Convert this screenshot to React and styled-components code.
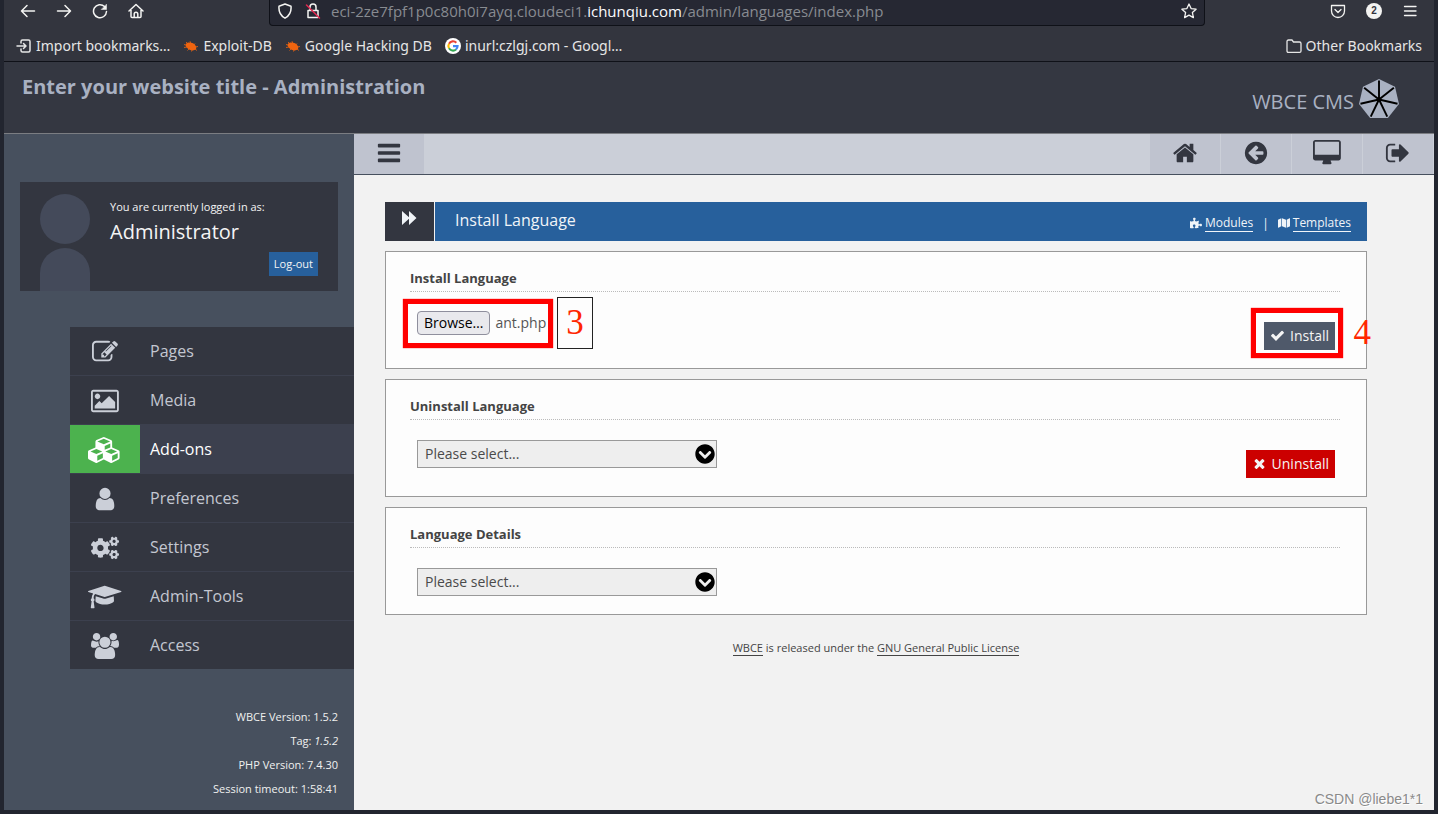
import React, { useRef } from "react";
import styled, { createGlobalStyle, css } from "styled-components";
import { FaCogs, FaMap, FaPuzzlePiece, FaChevronCircleDown } from "react-icons/fa";

const GlobalStyle = createGlobalStyle`
  *, *::before, *::after { box-sizing: border-box; }
  body { margin: 0; background: #22252f; }
  button, select, input { font: inherit; color: inherit; }
  button { border: 0; padding: 0; background: none; cursor: pointer; }
  a { color: inherit; text-decoration: none; }
`;

const ui = `"Noto Sans", "Open Sans", sans-serif`;
const page = `"Open Sans", "Noto Sans", sans-serif`;

/* ---------- icons ---------- */

const glyphs = {
  bars: ["0 0 1792 1792", "M1664 1344v128q0 26-19 45t-45 19h-1408q-26 0-45-19t-19-45v-128q0-26 19-45t45-19h1408q26 0 45 19t19 45zm0-512v128q0 26-19 45t-45 19h-1408q-26 0-45-19t-19-45v-128q0-26 19-45t45-19h1408q26 0 45 19t19 45zm0-512v128q0 26-19 45t-45 19h-1408q-26 0-45-19t-19-45v-128q0-26 19-45t45-19h1408q26 0 45 19t19 45z"],
  home: ["0 0 1792 1792", "M1472 992v480q0 26-19 45t-45 19h-384v-384h-256v384h-384q-26 0-45-19t-19-45v-480q0-1 .5-3t.5-3l575-474 575 474q1 2 1 6zm223-69l-62 74q-8 9-21 11h-3q-13 0-21-7l-692-577-692 577q-12 8-24 7-13-2-21-11l-62-74q-8-10-7-23.5t11-21.5l719-599q32-26 76-26t76 26l244 204v-195q0-14 9-23t23-9h192q14 0 23 9t9 23v408l219 182q10 8 11 21.5t-7 23.5z"],
  back: ["0 0 1792 1792", "M1408 960v-128q0-26-19-45t-45-19h-502l189-189q19-19 19-45t-19-45l-91-91q-18-18-45-18t-45 18l-362 362-91 91q-18 18-18 45t18 45l91 91 362 362q18 18 45 18t45-18l91-91q18-18 18-45t-18-45l-189-189h502q26 0 45-19t19-45zm256-64q0 209-103 385.5t-279.5 279.5-385.5 103-385.5-103-279.5-279.5-103-385.5 103-385.5 279.5-279.5 385.5-103 385.5 103 279.5 279.5 103 385.5z"],
  desktop: ["-64 0 1920 1792", "M1728 992v-832q0-13-9.5-22.5t-22.5-9.5h-1600q-13 0-22.5 9.5t-9.5 22.5v832q0 13 9.5 22.5t22.5 9.5h1600q13 0 22.5-9.5t9.5-22.5zm128-832v1088q0 66-47 113t-113 47h-544q0 37 16 77.5t32 71 16 43.5q0 26-19 45t-45 19h-512q-26 0-45-19t-19-45q0-14 16-44t32-70 16-78h-544q-66 0-113-47t-47-113v-1088q0-66 47-113t113-47h1600q66 0 113 47t47 113z"],
  signOut: ["0 0 1792 1792", "M704 1440q0 4 1 20t.5 26.5-3 23.5-10 19.5-20.5 6.5h-320q-119 0-203.5-84.5t-84.5-203.5v-704q0-119 84.5-203.5t203.5-84.5h320q13 0 22.5 9.5t9.5 22.5q0 4 1 20t.5 26.5-3 23.5-10 19.5-20.5 6.5h-320q-66 0-113 47t-47 113v704q0 66 47 113t113 47h312l11.5 1 11.5 3 8 5.5 7 9 2 13.5zm928-544q0 26-19 45l-544 544q-19 19-45 19t-45-19-19-45v-288h-448q-26 0-45-19t-19-45v-384q0-26 19-45t45-19h448v-288q0-26 19-45t45-19 45 19l544 544q19 19 19 45z"],
  edit: ["0 0 1792 1792", "M888 1184l116-116-152-152-116 116v56h96v96h56zm440-720q-16-16-33 1l-350 350q-17 17-1 33t33-1l350-350q17-17 1-33zm80 594v190q0 119-84.5 203.5t-203.5 84.5h-832q-119 0-203.5-84.5t-84.5-203.5v-832q0-119 84.5-203.5t203.5-84.5h832q63 0 117 25 15 7 18 23 3 17-9 29l-49 49q-14 14-32 8-23-6-45-6h-832q-66 0-113 47t-47 113v832q0 66 47 113t113 47h832q66 0 113-47t47-113v-126q0-13 9-22l64-64q15-15 35-7t20 29zm-96-738l288 288-672 672h-288v-288zm444 132l-92 92-288-288 92-92q28-28 68-28t68 28l152 152q28 28 28 68t-28 68z"],
  picture: ["-64 0 1920 1792", "M576 576q0 80-56 136t-136 56-136-56-56-136 56-136 136-56 136 56 56 136zm1024 384v448h-1408v-192l320-320 160 160 512-512zm96-704h-1600q-13 0-22.5 9.5t-9.5 22.5v1216q0 13 9.5 22.5t22.5 9.5h1600q13 0 22.5-9.5t9.5-22.5v-1216q0-13-9.5-22.5t-22.5-9.5zm160 32v1216q0 66-47 113t-113 47h-1600q-66 0-113-47t-47-113v-1216q0-66 47-113t113-47h1600q66 0 113 47t47 113z"],
  cubes: ["0 0 2304 1792", "M640 1632l384-192v-314l-384 164v342zm-64-454l404-173-404-173-404 173zm1088 454l384-192v-314l-384 164v342zm-64-454l404-173-404-173-404 173zm-448-293l384-165v-266l-384 164v267zm-64-379l441-189-441-189-441 189zm1088 518v416q0 36-19 67t-52 47l-448 224q-25 14-57 14t-57-14l-448-224q-4-2-7-4-2 2-7 4l-448 224q-25 14-57 14t-57-14l-448-224q-33-16-52-47t-19-67v-416q0-38 21.5-70t56.5-48l434-186v-400q0-38 21.5-70t56.5-48l448-192q23-10 50-10t50 10l448 192q35 16 56.5 48t21.5 70v400l434 186q36 16 57 48t21 70z"],
  user: ["0 0 1792 1792", "M1536 1399q0 109-62.5 187t-150.5 78h-854q-88 0-150.5-78t-62.5-187q0-85 8.5-160.5t31.5-152 58.5-131 94-89 134.5-34.5q131 128 313 128t313-128q76 0 134.5 34.5t94 89 58.5 131 31.5 152 8.5 160.5zm-256-887q0 159-112.5 271.5t-271.5 112.5-271.5-112.5-112.5-271.5 112.5-271.5 271.5-112.5 271.5 112.5 112.5 271.5z"],
  cap: ["0 0 2304 1792", "M1774 836l18 316q4 69-82 128t-235 93.5-323 34.5-323-34.5-235-93.5-82-128l18-316 574 181q22 7 48 7t48-7zm530-324q0 23-22 31l-1120 352q-4 1-10 1t-10-1l-652-206q-43 34-71 111.5t-34 178.5q63 36 63 109 0 69-58 107l58 433q2 14-8 25-9 11-24 11h-192q-15 0-24-11-10-11-8-25l58-433q-58-38-58-107 0-73 65-111 11-207 98-330l-333-104q-22-8-22-31t22-31l1120-352q4-1 10-1t10 1l1120 352q22 8 22 31z"],
  users: ["0 0 1920 1792", "M593 896q-162 5-265 128h-134q-82 0-138-40.5t-56-118.5q0-353 124-353 6 0 43.5 21t97.5 42.5 119 21.5q67 0 133-23-5 37-5 66 0 159 93 293zm1071 637q0 120-73 189.5t-194 69.5h-874q-121 0-194-69.5t-73-189.5q0-53 3.5-103.5t14-109 26.5-108.5 43-97.5 62-81 85.5-53.5 111.5-20q10 0 43 21.5t73 48 107 48 135 21.5 135-21.5 107-48 73-48 43-21.5q61 0 111.5 20t85.5 53.5 62 81 43 97.5 26.5 108.5 14 109 3.5 103.5zm-1024-1277q0 106-75 181t-181 75-181-75-75-181 75-181 181-75 181 75 75 181zm704 384q0 159-112.5 271.5t-271.5 112.5-271.5-112.5-112.5-271.5 112.5-271.5 271.5-112.5 271.5 112.5 112.5 271.5zm576 225q0 78-56 118.5t-138 40.5h-134q-103-123-265-128 93-134 93-293 0-29-5-66 66 23 133 23 59 0 119-21.5t97.5-42.5 43.5-21q124 0 124 353zm-128-609q0 106-75 181t-181 75-181-75-75-181 75-181 181-75 181 75 75 181z"],
  check: ["0 0 1792 1792", "M1671 566q0 40-28 68l-724 724-136 136q-28 28-68 28t-68-28l-136-136-362-362q-28-28-28-68t28-68l136-136q28-28 68-28t68 28l294 295 656-657q28-28 68-28t68 28l136 136q28 28 28 68z"],
  times: ["0 0 1792 1792", "M1490 1322q0 40-28 68l-136 136q-28 28-68 28t-68-28l-294-294-294 294q-28 28-68 28t-68-28l-136-136q-28-28-28-68t28-68l294-294-294-294q-28-28-28-68t28-68l136-136q28-28 68-28t68 28l294 294 294-294q28-28 68-28t68 28l136 136q28 28 28 68t-28 68l-294 294 294 294q28 28 28 68z"],
};

const GlyphSvg = styled.svg`
  display: block;
  flex: none;
  height: ${(p) => p.$size}px;
  fill: currentColor;
`;

function Glyph({ name, size = 26 }) {
  const [box, d] = glyphs[name];
  return (
    <GlyphSvg $size={size} viewBox={box} aria-hidden="true">
      <path d={d} />
    </GlyphSvg>
  );
}

const LineSvg = styled.svg`
  display: block;
  flex: none;
  fill: none;
  stroke: currentColor;
  stroke-width: 1.5;
  stroke-linecap: round;
  stroke-linejoin: round;
`;

const Line = ({ children, size = 16 }) => (
  <LineSvg width={size} height={size} viewBox="0 0 16 16" aria-hidden="true">{children}</LineSvg>
);

const Bug = () => (
  <svg width="16" height="16" viewBox="0 0 16 16" aria-hidden="true">
    <ellipse cx="8" cy="8.4" rx="5.6" ry="3.6" fill="#f0640f" transform="rotate(24 8 8.4)" />
    <path d="M5 6L3 4M8 5.5L7 3.2M10.5 7L12 5.5M12 9l3-.5M4 9l-3 .5M6 11l-1.5 1.5M9 12l-.5 1.5M12 11l2 1.5M1 6.500l3 .8" stroke="#f0640f" strokeWidth="0.8" fill="none" />
  </svg>
);

const GoogleMark = () => (
  <svg width="16" height="16" viewBox="0 0 16 16" aria-hidden="true">
    <circle cx="8" cy="8" r="8" fill="#fff" />
    <g fill="none" strokeWidth="2.1">
      <path d="M11.300 4.700A4.600 4.600 0 0 0 4 5.700" stroke="#ea4335" />
      <path d="M4 5.700a4.600 4.600 0 0 0 0 4.600" stroke="#fbbc05" />
      <path d="M4 10.300a4.600 4.600 0 0 0 7 1.200" stroke="#34a853" />
      <path d="M8 8.100h4.600a4.600 4.600 0 0 1-1.600 3.400" stroke="#4285f4" />
    </g>
  </svg>
);

function Heptagon() {
  const point = (i, r) => {
    const a = (i * 2 * Math.PI) / 7 - Math.PI / 2;
    return [20 + r * Math.cos(a), 20.500 + r * Math.sin(a)];
  };
  const corners = [0, 1, 2, 3, 4, 5, 6];
  return (
    <svg width="40" height="40" viewBox="0 0 40 40" aria-hidden="true">
      <polygon fill="#a9b1c2" points={corners.map((i) => point(i, 20.500).join(",")).join(" ")} />
      {corners.map((i) => {
        const [x, y] = point(i, 19);
        return <line key={i} x1="20" y1="20.500" x2={x} y2={y} stroke="#000" strokeWidth="1.900" />;
      })}
      <circle cx="20" cy="20.500" r="2.200" fill="#000" />
    </svg>
  );
}

/* ---------- browser chrome ---------- */

const Frame = styled.div`
  position: relative;
  display: flex;
  flex-direction: column;
  min-height: 100vh;
  padding: 0 4px 4px;
  background: #22252f;
`;

const BrowserBar = styled.div`
  display: flex;
  height: 26px;
  padding: 0 6px;
  background: #33353e;
  color: #f4f4f2;
  font-family: ${ui};
`;

const ChromeButton = styled.button`
  display: grid;
  place-items: center;
  width: 36px;
  height: 22px;
`;

const AddressBox = styled.div`
  flex: 1;
  display: flex;
  align-items: center;
  min-width: 0;
  margin: 0 115px;
  padding: 0 7px 4px;
  border: solid #0f1118;
  border-width: 0 1px 1px;
  border-radius: 0 0 4px 4px;
  background: #262833;
`;

const Address = styled.div`
  flex: 1;
  margin-left: 10px;
  overflow: hidden;
  white-space: nowrap;
  font-family: ${page};
  font-size: 15px;
  line-height: 20px;
  color: #888b91;
  b { font-weight: 400; color: #fbfbfe; }
`;

const AddressIcons = styled.div`
  display: flex;
  gap: 12px;
`;

const CountBadge = styled.span`
  display: grid;
  place-items: center;
  width: 16px;
  height: 16px;
  border-radius: 8px;
  background: #f4f4f2;
  color: #33353e;
  font: 700 10px/16px "Liberation Sans", sans-serif;
`;

const BookmarksBar = styled.nav`
  display: flex;
  gap: 13px;
  height: 36px;
  padding: 8px 12px 0;
  border-bottom: 1px solid #0f1118;
  background: #33353e;
  color: #e6e6e6;
  font: 14px/24px ${ui};
`;

const Bookmark = styled.a`
  display: flex;
  align-items: center;
  gap: 4px;
  height: 24px;
  white-space: nowrap;
  &:last-child { margin-left: auto; }
`;

/* ---------- page header ---------- */

const Header = styled.header`
  display: flex;
  justify-content: space-between;
  height: 72px;
  padding: 10px 35px 0 18px;
  border-bottom: 1px solid #7b7d82;
  background: #343741;
  color: #a9b1c2;
  font-family: ${page};
`;

const SiteTitle = styled.h1`
  margin: 0;
  font-size: 20px;
  line-height: 30px;
`;

const Brand = styled.div`
  display: flex;
  align-items: flex-end;
  gap: 5px;
  height: 47px;
  font-size: 20px;
  line-height: 34px;
`;

/* ---------- sidebar ---------- */

const Body = styled.div`
  flex: 1;
  display: flex;
  font-family: ${page};
`;

const Sidebar = styled.aside`
  flex: none;
  display: flex;
  flex-direction: column;
  width: 350px;
  padding: 48px 0 9px;
  background: #47505e;
`;

const UserCard = styled.section`
  display: flex;
  gap: 20px;
  height: 109px;
  margin: 0 16px 36px;
  padding: 12px 20px 0;
  background: #333640;
  color: #f4f4f4;
`;

const Avatar = styled.div`
  display: flex;
  flex-direction: column;
  gap: 4px;
  width: 50px;
  &::before {
    content: "";
    height: 50px;
    border-radius: 25px;
    background: #444a5a;
  }
  &::after {
    content: "";
    flex: 1;
    border-radius: 25px 25px 0 0;
    background: #444a5a;
  }
`;

const UserText = styled.div`
  flex: 1;
  display: flex;
  flex-direction: column;
  font-size: 11px;
  line-height: 26px;
  strong { font-size: 20px; font-weight: 400; line-height: 24px; }
`;

const LogoutButton = styled.button`
  align-self: flex-end;
  height: 24px;
  margin-top: 8px;
  padding: 0 5px;
  background: #27609c;
  line-height: 24px;
`;

const Menu = styled.nav`
  margin-left: 66px;
  background: #333640;
`;

const MenuLink = styled.a`
  display: flex;
  align-items: center;
  gap: 10px;
  height: 49px;
  border-bottom: 1px solid #3c404e;
  color: #c3c7d1;
  font-size: 16px;
  &:last-child { height: 48px; border-bottom: 0; }
  ${(p) => p.$active && css`
    background: #3c404e;
    color: #fff;
  `}
`;

const MenuIcon = styled.span`
  display: grid;
  place-items: center;
  width: 70px;
  height: 48px;
  padding-top: 2px;
  background: ${(p) => (p.$active ? "#4cb24e" : "transparent")};
  color: ${(p) => (p.$active ? "#fff" : "#cbcfd8")};
`;

const Versions = styled.div`
  margin-top: auto;
  padding-right: 16px;
  color: #f0f0f0;
  font-size: 11px;
  line-height: 24px;
  text-align: right;
`;

/* ---------- main column ---------- */

const Main = styled.main`
  flex: 1;
  min-width: 0;
  background: #f2f2f2;
  color: #444;
`;

const Toolbar = styled.div`
  display: flex;
  height: 41px;
  border-bottom: 1px solid #47505e;
  background: #cbcfd8;
  color: #333640;
`;

const ToolButton = styled.button`
  display: grid;
  place-items: center;
  width: 71px;
  height: 40px;
  padding-bottom: 3px;
  border-right: 1px solid #cbcfd8;
  background: #bfc3cf;
  &:first-child { margin-right: auto; }
`;

const Content = styled.div`
  display: flex;
  flex-direction: column;
  gap: 10px;
  padding: 27px 67px 20px 31px;
`;

const TitleBar = styled.div`
  display: flex;
  gap: 1px;
  height: 39px;
  color: #f0f4f8;
`;

const TitleIcon = styled.div`
  display: grid;
  place-items: center;
  width: 49px;
  padding: 0 2px 8px 0;
  background: #333640;
`;

const TitleBlue = styled.div`
  flex: 1;
  display: flex;
  justify-content: space-between;
  padding: 0 16px 0 20px;
  background: #27609c;
  h2 { margin: 0; font-size: 16px; font-weight: 400; line-height: 36px; }
`;

const TitleLinks = styled.div`
  display: flex;
  align-items: center;
  gap: 9px;
  padding-top: 3px;
  font-size: 12px;
`;

const IconLink = styled.a`
  display: flex;
  align-items: center;
  gap: 3px;
  span { border-bottom: 1px solid currentColor; line-height: 16px; }
`;

const Panel = styled.section`
  position: relative;
  border: 1px solid #999;
  background: #fdfdfd;
`;

const PanelTitle = styled.h3`
  height: 40px;
  margin: 0 26px 0 24px;
  padding-top: 16px;
  border-bottom: 1px dotted #bbb;
  font-size: 13px;
  line-height: 20px;
`;

const PanelBody = styled.form`
  display: flex;
  justify-content: space-between;
  align-items: flex-start;
  padding: 20px 31px 18px;
  font-size: 14px;
`;

const FileRow = styled.div`
  display: flex;
  align-items: center;
  gap: 5px;
  height: 22px;
  color: #555;
  span { padding-bottom: 2px; }
`;

const BrowseButton = styled.button`
  height: 24px;
  padding: 0 6px;
  border: 1px solid #8f8f9d;
  border-radius: 4px;
  background: #e9e9ed;
  color: #000;
  font-size: 14px;
  line-height: 22px;
`;

const ActionButton = styled.button`
  display: flex;
  align-items: center;
  gap: 5px;
  height: 28px;
  margin-top: 10px;
  padding: 0 6px 2px;
  background: ${(p) => (p.$danger ? "#c00" : "#4f596a")};
  color: #f4f4f4;
`;

const SelectWrap = styled.label`
  position: relative;
  width: 300px;
  height: 28px;
  color: #000;
`;

const Select = styled.select`
  appearance: none;
  display: block;
  width: 100%;
  height: 28px;
  padding: 0 28px 2px 7px;
  border: 1px solid #999;
  border-radius: 0;
  background: #eee;
  color: #4a4a4a;
`;

const SelectArrow = styled(FaChevronCircleDown)`
  position: absolute;
  top: 4px;
  right: 2px;
  pointer-events: none;
`;

const License = styled.p`
  margin: 14px 0 0;
  font-size: 11px;
  line-height: 18px;
  text-align: center;
  a { display: inline-block; border-bottom: 1px solid #444; line-height: 15px; }
`;

/* ---------- tutorial marks over the page ---------- */

const RedFrame = styled.span`
  position: absolute;
  border: 5px solid #f00;
  box-shadow: 0 0 1px #f00;
  pointer-events: none;
`;

const FileFrame = styled(RedFrame)`
  top: 47px;
  left: 17px;
  width: 150px;
  height: 49px;
`;

const InstallFrame = styled(RedFrame)`
  top: 56px;
  right: 23px;
  width: 92px;
  height: 50px;
`;

const StepNumber = styled.span`
  position: absolute;
  color: #ff2600;
  font: 35px/50px "Liberation Serif", serif;
  text-align: center;
`;

const BoxedStep = styled(StepNumber)`
  top: 45px;
  left: 171px;
  width: 36px;
  border: 1px solid #222;
`;

const LooseStep = styled(StepNumber)`
  top: 56px;
  right: -5px;
`;

const Watermark = styled.div`
  position: absolute;
  right: 15px;
  bottom: 5px;
  color: #8a8a8a;
  font: 14px/20px "Liberation Sans", sans-serif;
  text-shadow: 1px 1px 0 #fff;
`;

const menu = [
  ["Pages", <Glyph name="edit" />],
  ["Media", <Glyph name="picture" />],
  ["Add-ons", <Glyph name="cubes" />],
  ["Preferences", <Glyph name="user" />],
  ["Settings", <FaCogs size={28} />],
  ["Admin-Tools", <Glyph name="cap" />],
  ["Access", <Glyph name="users" />],
];

function LanguageSelect({ label }) {
  return (
    <SelectWrap>
      <Select aria-label={label} defaultValue="">
        <option value="">Please select...</option>
      </Select>
      <SelectArrow size={20} />
    </SelectWrap>
  );
}

export default function App() {
  const fileInput = useRef(null);
  return (
    <Frame>
      <GlobalStyle />
      <BrowserBar>
        <ChromeButton aria-label="Back"><Line><path d="M14.500 8H1.500M7 2.500L1.500 8 7 13.500" /></Line></ChromeButton>
        <ChromeButton aria-label="Forward"><Line><path d="M1.500 8h13M9 2.500L14.500 8 9 13.500" /></Line></ChromeButton>
        <ChromeButton aria-label="Reload"><Line><path d="M14.500 8.500A6.500 6.500 0 1 1 12.500 3.500l1 1" /><path d="M14.500 1.500v5h-5z" fill="currentColor" strokeWidth="0.5" /></Line></ChromeButton>
        <ChromeButton aria-label="Home"><Line><path d="M1 8l7-6.500L15 8M3 7v6.500q0 1 1 1h8q1 0 1-1V7M6.200 14.500V11q0-1.800 1.800-1.800T9.800 11v3.500" /></Line></ChromeButton>
        <AddressBox>
          <AddressIcons>
            <Line><path d="M8 1l6 2.200c.5 5.200-1.500 9.500-6 12-4.500-2.500-6.500-6.800-6-12z" /></Line>
            <Line>
              <path d="M3 7.500h10v7H3zM5 7.500V4q0-3 3-3t3 3v3.500" />
              <path d="M1.500 2l13 13" stroke="#e22850" />
            </Line>
          </AddressIcons>
          <Address>eci-2ze7fpf1p0c80h0i7ayq.cloudeci1.<b>ichunqiu.com</b>/admin/languages/index.php</Address>
          <Line><path d="M8 1l2.100 4.600 5 .6-3.700 3.400 1 5L8 12.100l-4.400 2.500 1-5L.9 6.200l5-.6z" strokeWidth="1.3" /></Line>
        </AddressBox>
        <ChromeButton aria-label="Save to Pocket"><Line><path d="M1.500 2.500h13V8a6.500 6.500 0 0 1-13 0zM5 6.500l3 3 3-3" strokeWidth="1.300" /></Line></ChromeButton>
        <ChromeButton aria-label="Notifications"><CountBadge>2</CountBadge></ChromeButton>
        <ChromeButton aria-label="Menu"><Line><path d="M2.500 3.500h11.500M2.500 8h11.500M2.500 12.500h11.500" strokeWidth="1.300" /></Line></ChromeButton>
      </BrowserBar>
      <BookmarksBar>
        <Bookmark href="#"><Line><path d="M5 5V3.500q0-1.500 1.500-1.500h6q1.500 0 1.500 1.500v9q0 1.500-1.500 1.500h-6Q5 14 5 12.500V11M1 8h8.500M7.500 5.500L10 8l-2.500 2.500" /></Line>Import bookmarks…</Bookmark>
        <Bookmark href="#"><Bug />Exploit-DB</Bookmark>
        <Bookmark href="#"><Bug />Google Hacking DB</Bookmark>
        <Bookmark href="#"><GoogleMark />inurl:czlgj.com - Googl…</Bookmark>
        <Bookmark href="#"><Line><path d="M1 13V3.500q0-1.500 1.500-1.500h3.500l1.500 2h6q1.500 0 1.500 1.500V13q0 1.300-1.300 1.300H2.300Q1 14.300 1 13z" strokeWidth="1.300" /></Line>Other Bookmarks</Bookmark>
      </BookmarksBar>

      <Header>
        <SiteTitle>Enter your website title - Administration</SiteTitle>
        <Brand>WBCE CMS<Heptagon /></Brand>
      </Header>

      <Body>
        <Sidebar>
          <UserCard>
            <Avatar />
            <UserText>
              <span>You are currently logged in as:</span>
              <strong>Administrator</strong>
              <LogoutButton>Log-out</LogoutButton>
            </UserText>
          </UserCard>
          <Menu>
            {menu.map(([name, icon]) => {
              const active = name === "Add-ons";
              return (
                <MenuLink key={name} href="#" $active={active}>
                  <MenuIcon $active={active}>{icon}</MenuIcon>
                  {name}
                </MenuLink>
              );
            })}
          </Menu>
          <Versions>
            <div>WBCE Version: 1.5.2</div>
            <div>Tag: <i>1.5.2</i></div>
            <div>PHP Version: 7.4.30</div>
            <div>Session timeout: 1:58:41</div>
          </Versions>
        </Sidebar>

        <Main>
          <Toolbar>
            <ToolButton aria-label="Toggle menu"><Glyph name="bars" /></ToolButton>
            <ToolButton aria-label="Home"><Glyph name="home" /></ToolButton>
            <ToolButton aria-label="Go back"><Glyph name="back" /></ToolButton>
            <ToolButton aria-label="View site"><Glyph name="desktop" /></ToolButton>
            <ToolButton aria-label="Log out"><Glyph name="signOut" /></ToolButton>
          </Toolbar>
          <Content>
            <TitleBar>
              <TitleIcon>
                <svg width="16" height="14" viewBox="0 0 16 14" fill="currentColor" aria-hidden="true">
                  <path d="M1 0l7 6.300V0l7.500 7L8 14V7.700L1 14z" />
                </svg>
              </TitleIcon>
              <TitleBlue>
                <h2>Install Language</h2>
                <TitleLinks>
                  <IconLink href="#"><FaPuzzlePiece size={12} /><span>Modules</span></IconLink>
                  |
                  <IconLink href="#"><FaMap size={12} /><span>Templates</span></IconLink>
                </TitleLinks>
              </TitleBlue>
            </TitleBar>

            <Panel>
              <PanelTitle>Install Language</PanelTitle>
              <PanelBody onSubmit={(e) => e.preventDefault()}>
                <FileRow>
                  <input ref={fileInput} type="file" hidden aria-label="Language file" />
                  <BrowseButton type="button" onClick={() => fileInput.current.click()}>Browse…</BrowseButton>
                  <span>ant.php</span>
                </FileRow>
                <ActionButton><Glyph name="check" size={15} />Install</ActionButton>
              </PanelBody>
              <FileFrame />
              <BoxedStep>3</BoxedStep>
              <InstallFrame />
              <LooseStep>4</LooseStep>
            </Panel>

            <Panel>
              <PanelTitle>Uninstall Language</PanelTitle>
              <PanelBody onSubmit={(e) => e.preventDefault()}>
                <LanguageSelect label="Language to uninstall" />
                <ActionButton $danger><Glyph name="times" size={15} />Uninstall</ActionButton>
              </PanelBody>
            </Panel>

            <Panel>
              <PanelTitle>Language Details</PanelTitle>
              <PanelBody onSubmit={(e) => e.preventDefault()}>
                <LanguageSelect label="Language to show" />
              </PanelBody>
            </Panel>

            <License>
              <a href="#">WBCE</a> is released under the <a href="#">GNU General Public License</a>
            </License>
          </Content>
        </Main>
      </Body>
      <Watermark>CSDN @liebe1*1</Watermark>
    </Frame>
  );
}
